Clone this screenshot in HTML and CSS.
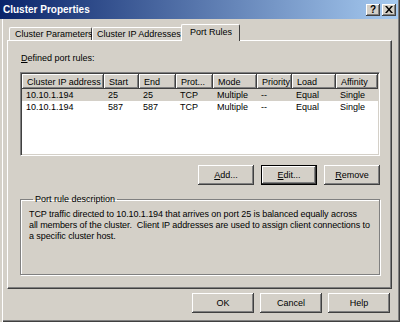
FILE: index.html
```html
<!DOCTYPE html>
<html lang="en">
<head>
  <meta charset="UTF-8">
  <title>Cluster Properties</title>
  <link rel="stylesheet" href="styles.css">
</head>
<body>
  <div class="window">
    <div class="titlebar">
      <span class="title">Cluster Properties</span>
      <div class="caption-btns">
        <div class="caption-btn help-btn">?</div>
        <div class="caption-btn close-btn">
          <svg width="8" height="7" viewBox="0 0 8 7"><path d="M0 0h2l2 2.5L6 0h2L5 3.5 8 7H6L4 4.5 2 7H0l3-3.5z" fill="#000"/></svg>
        </div>
      </div>
    </div>

    <div class="content">
      <div class="tabs">
        <div class="tab tab-params">Cluster Parameters</div>
        <div class="tab tab-ips">Cluster IP Addresses</div>
        <div class="tab tab-rules active">Port Rules</div>
      </div>

      <div class="panel">
        <div class="field-label"><u>D</u>efined port rules:</div>

        <div class="listview">
          <table>
            <colgroup>
              <col style="width:82px"><col style="width:35px"><col style="width:37px"><col style="width:37px">
              <col style="width:44px"><col style="width:35px"><col style="width:44px"><col style="width:42px">
            </colgroup>
            <thead>
              <tr>
                <th>Cluster IP address</th><th>Start</th><th>End</th><th>Prot...</th>
                <th>Mode</th><th>Priority</th><th>Load</th><th>Affinity</th>
              </tr>
            </thead>
            <tbody>
              <tr class="selected">
                <td>10.10.1.194</td><td>25</td><td>25</td><td>TCP</td>
                <td>Multiple</td><td>--</td><td>Equal</td><td>Single</td>
              </tr>
              <tr>
                <td>10.10.1.194</td><td>587</td><td>587</td><td>TCP</td>
                <td>Multiple</td><td>--</td><td>Equal</td><td>Single</td>
              </tr>
            </tbody>
          </table>
        </div>

        <div class="list-buttons">
          <div class="btn"><u>A</u>dd...</div>
          <div class="btn default"><u>E</u>dit...</div>
          <div class="btn"><u>R</u>emove</div>
        </div>

        <fieldset class="group">
          <legend>Port rule description</legend>
          <p>TCP traffic directed to 10.10.1.194 that arrives on port 25 is balanced equally across<br>all members of the cluster.&nbsp; Client IP addresses are used to assign client connections to<br>a specific cluster host.</p>
        </fieldset>
      </div>

      <div class="dialog-buttons">
        <div class="btn wide">OK</div>
        <div class="btn wide">Cancel</div>
        <div class="btn wide">Help</div>
      </div>
    </div>
  </div>
</body>
</html>
```

FILE: styles.css
```css
body {
  margin: 0;
  background: #d4d0c8;
  font-family: "Liberation Sans", Arial, sans-serif;
  font-size: 9px;
  color: #000;
}
.window {
  width: 400px;
  height: 322px;
  box-sizing: border-box;
  background: #d4d0c8;
  box-shadow: inset 2px 0 #d4d0c8, inset 3px 0 #fff, inset -1px -1px #404040, inset -2px -2px #808080;
}
.titlebar {
  height: 19px;
  margin-right: 2px;
  display: flex;
  align-items: center;
  justify-content: space-between;
  padding-left: 3px;
  background: linear-gradient(to right, #0a246a, #a6caf0);
}
.title {
  color: #fff;
  font-weight: bold;
  font-size: 10px;
}
.caption-btns {
  display: flex;
  gap: 2px;
  padding-right: 2px;
}
.caption-btn {
  width: 14px;
  height: 12px;
  box-sizing: border-box;
  display: flex;
  align-items: center;
  justify-content: center;
  background: #d4d0c8;
  font-weight: bold;
  font-size: 10px;
  box-shadow: inset -1px -1px #404040, inset 1px 1px #fff, inset -2px -2px #808080;
}
.content {
  padding-left: 7px;
}
.tabs {
  display: flex;
  align-items: flex-end;
  height: 16px;
  margin-top: 5px;
  padding-left: 2px;
}
.tab {
  height: 13px;
  box-sizing: border-box;
  line-height: 12px;
  padding-left: 5px;
  white-space: nowrap;
  background: #d4d0c8;
  border-top: 1px solid #fff;
  border-left: 1px solid #fff;
  border-right: 1px solid #404040;
  border-radius: 2px 2px 0 0;
}
.tab-params { width: 83px; }
.tab-ips { width: 91px; padding-left: 4px; }
.tab.active {
  width: 59px;
  height: 17px;
  margin: 0 0 -1px -2px;
  line-height: 15px;
  padding-left: 8px;
  position: relative;
  z-index: 1;
}
.panel {
  width: 385px;
  height: 249px;
  box-sizing: border-box;
  padding: 11px 0 0 12px;
  border-top: 1px solid #fff;
  border-left: 1px solid #fff;
  border-right: 1px solid #404040;
  border-bottom: 1px solid #404040;
  box-shadow: inset -1px -1px #808080;
}
.field-label {
  height: 13px;
  line-height: 13px;
  margin-left: 1px;
}
.listview {
  width: 360px;
  height: 84px;
  margin-top: 7px;
  box-sizing: border-box;
  background: #fff;
  border-top: 1px solid #808080;
  border-left: 1px solid #808080;
  border-right: 1px solid #fff;
  border-bottom: 1px solid #fff;
  box-shadow: inset 1px 1px #404040, inset -1px -1px #d4d0c8;
  padding: 1px;
}
table {
  border-collapse: collapse;
  table-layout: fixed;
  width: 356px;
}
th {
  height: 15px;
  padding: 0 3px 0 5px;
  font-weight: normal;
  text-align: left;
  white-space: nowrap;
  overflow: hidden;
  background: #d4d0c8;
  box-shadow: inset -1px -1px #404040, inset 1px 1px #fff, inset -2px -2px #808080;
}
td {
  height: 12px;
  line-height: 12px;
  padding: 0 2px 0 4px;
  white-space: nowrap;
  overflow: hidden;
}
tr.selected td {
  background: #d4d0c8;
}
.list-buttons {
  width: 360px;
  display: flex;
  justify-content: flex-end;
  gap: 7px;
  margin-top: 9px;
}
.btn {
  width: 56px;
  height: 20px;
  box-sizing: border-box;
  display: flex;
  align-items: center;
  justify-content: center;
  background: #d4d0c8;
  box-shadow: inset -1px -1px #404040, inset 1px 1px #fff, inset -2px -2px #808080;
}
.btn.default {
  box-shadow: inset 0 0 0 1px #000, inset -2px -2px #404040, inset 2px 2px #fff, inset -3px -3px #808080;
}
.group {
  width: 360px;
  height: 82px;
  box-sizing: border-box;
  margin: 8px 0 0;
  padding: 0 0 0 8px;
  border: 1px solid #808080;
  box-shadow: 1px 1px 0 #fff, inset 1px 1px 0 #fff;
}
.group legend {
  padding: 0 2px;
  margin-left: 4px;
  line-height: 13px;
}
.group p {
  margin: 3px 0 0;
  line-height: 11px;
  letter-spacing: -0.08px;
  white-space: nowrap;
}
.dialog-buttons {
  display: flex;
  justify-content: flex-end;
  gap: 6px;
  margin-top: 4px;
  padding-right: 10px;
}
.btn.wide {
  width: 62px;
}
```
